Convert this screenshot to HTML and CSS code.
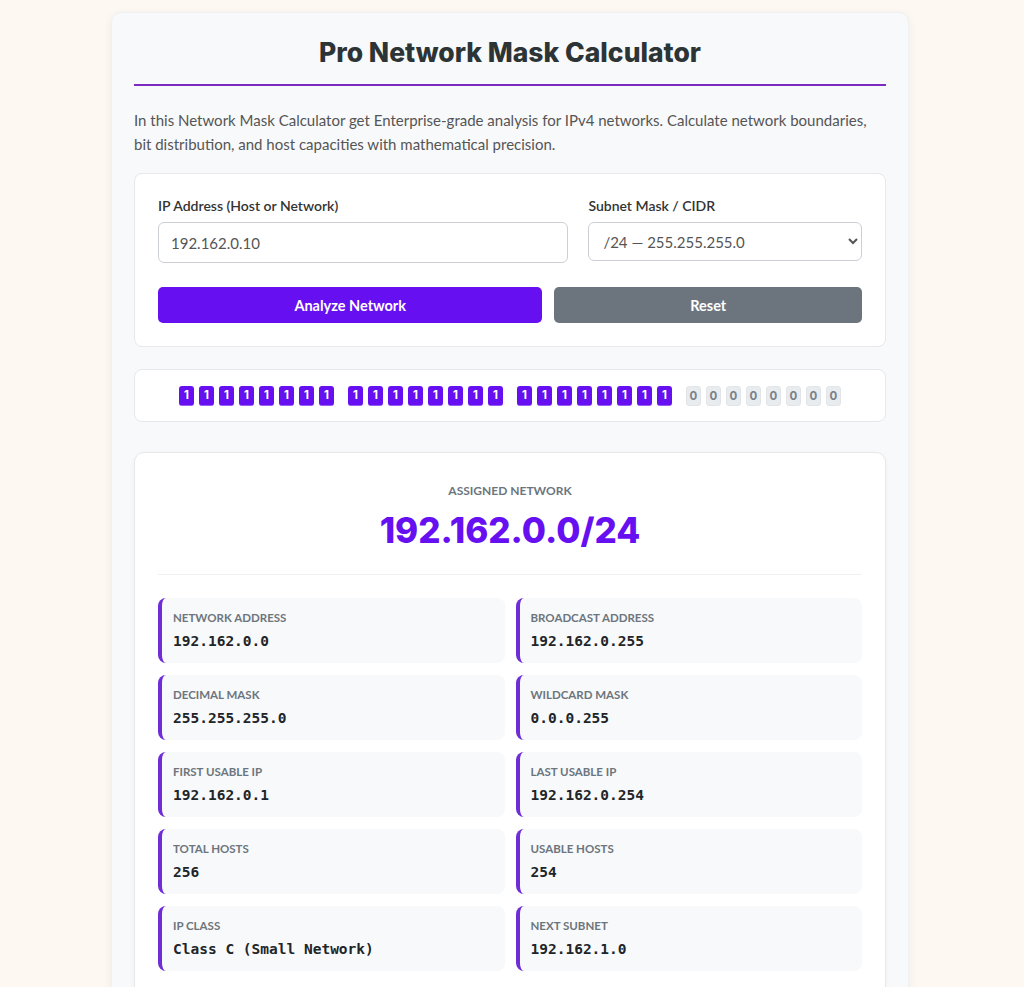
FILE: index.html
```html
<!DOCTYPE html>
<html>
<head>
    <title>Pro Network Mask Calculator</title>
    <meta name="viewport" content="width=device-width, initial-scale=1.0">
    <link rel="stylesheet" href="styles.css">
</head>
<body>
    <div class="container">
        <h1>Pro Network Mask Calculator</h1>
        <p class="intro">In this Network Mask Calculator get Enterprise-grade analysis for IPv4 networks. Calculate network boundaries, bit distribution, and host capacities with mathematical precision.</p>

        <div class="panel form-panel">
            <div class="form-row">
                <div class="input-group">
                    <label for="ipAddr">IP Address (Host or Network)</label>
                    <input type="text" id="ipAddr" value="192.162.0.10">
                </div>
                <div class="input-group">
                    <label for="cidr">Subnet Mask / CIDR</label>
                    <select id="cidr"></select>
                </div>
            </div>
            <div class="button-row">
                <button class="btn btn-primary" onclick="analyze()">Analyze Network</button>
                <button class="btn btn-secondary" onclick="resetForm()">Reset</button>
            </div>
        </div>

        <div class="panel bits-panel" id="bits"></div>

        <div class="panel result-panel">
            <div class="result-head">
                <div class="result-caption">Assigned Network</div>
                <div class="result-network" id="netCidr">192.162.0.0/24</div>
            </div>
            <div class="result-grid">
                <div class="stat"><div class="stat-label">Network Address</div><div class="stat-value" id="rNet"></div></div>
                <div class="stat"><div class="stat-label">Broadcast Address</div><div class="stat-value" id="rBcast"></div></div>
                <div class="stat"><div class="stat-label">Decimal Mask</div><div class="stat-value" id="rMask"></div></div>
                <div class="stat"><div class="stat-label">Wildcard Mask</div><div class="stat-value" id="rWild"></div></div>
                <div class="stat"><div class="stat-label">First Usable IP</div><div class="stat-value" id="rFirst"></div></div>
                <div class="stat"><div class="stat-label">Last Usable IP</div><div class="stat-value" id="rLast"></div></div>
                <div class="stat"><div class="stat-label">Total Hosts</div><div class="stat-value" id="rTotal"></div></div>
                <div class="stat"><div class="stat-label">Usable Hosts</div><div class="stat-value" id="rUsable"></div></div>
                <div class="stat"><div class="stat-label">IP Class</div><div class="stat-value" id="rClass"></div></div>
                <div class="stat"><div class="stat-label">Next Subnet</div><div class="stat-value" id="rNext"></div></div>
            </div>
        </div>
    </div>

    <script>
        function toIp(n) {
            return [n >>> 24, (n >>> 16) & 255, (n >>> 8) & 255, n & 255].join('.');
        }

        function maskOf(bits) {
            return bits === 0 ? 0 : (0xFFFFFFFF << (32 - bits)) >>> 0;
        }

        // fill the CIDR dropdown, /24 selected by default
        const select = document.getElementById('cidr');
        for (let b = 8; b <= 32; b++) {
            const opt = document.createElement('option');
            opt.value = b;
            opt.textContent = '/' + b + ' \u2014 ' + toIp(maskOf(b));
            if (b === 24) opt.selected = true;
            select.appendChild(opt);
        }

        function ipClass(first) {
            if (first < 128) return 'Class A (Large Network)';
            if (first < 192) return 'Class B (Medium Network)';
            if (first < 224) return 'Class C (Small Network)';
            if (first < 240) return 'Class D (Multicast)';
            return 'Class E (Reserved)';
        }

        function drawBits(bits) {
            const box = document.getElementById('bits');
            box.innerHTML = '';
            for (let o = 0; o < 4; o++) {
                const group = document.createElement('div');
                group.className = 'bit-group';
                for (let i = 0; i < 8; i++) {
                    const on = o * 8 + i < bits;
                    const cell = document.createElement('span');
                    cell.className = on ? 'bit bit-on' : 'bit bit-off';
                    cell.textContent = on ? '1' : '0';
                    group.appendChild(cell);
                }
                box.appendChild(group);
            }
        }

        function analyze() {
            const parts = document.getElementById('ipAddr').value.trim().split('.').map(Number);
            if (parts.length !== 4 || parts.some(p => isNaN(p) || p < 0 || p > 255)) {
                alert('Please enter a valid IPv4 address');
                return;
            }
            const bits = Number(select.value);
            const ip = ((parts[0] << 24) | (parts[1] << 16) | (parts[2] << 8) | parts[3]) >>> 0;
            const mask = maskOf(bits);
            const net = (ip & mask) >>> 0;
            const bcast = (net | (~mask >>> 0)) >>> 0;
            const total = Math.pow(2, 32 - bits);
            const usable = bits >= 31 ? (bits === 31 ? 2 : 1) : total - 2;

            document.getElementById('netCidr').innerText = toIp(net) + '/' + bits;
            document.getElementById('rNet').innerText = toIp(net);
            document.getElementById('rBcast').innerText = toIp(bcast);
            document.getElementById('rMask').innerText = toIp(mask);
            document.getElementById('rWild').innerText = toIp(~mask >>> 0);
            document.getElementById('rFirst').innerText = toIp(bits >= 31 ? net : net + 1);
            document.getElementById('rLast').innerText = toIp(bits >= 31 ? bcast : bcast - 1);
            document.getElementById('rTotal').innerText = total.toLocaleString('en-US');
            document.getElementById('rUsable').innerText = usable.toLocaleString('en-US');
            document.getElementById('rClass').innerText = ipClass(parts[0]);
            document.getElementById('rNext').innerText = toIp((bcast + 1) >>> 0);
            drawBits(bits);
        }

        function resetForm() {
            document.getElementById('ipAddr').value = '192.162.0.10';
            select.value = 24;
            analyze();
        }

        analyze();
    </script>
</body>
</html>
```

FILE: styles.css
```css
body {
    margin: 0;
    padding: 12px 4px 40px 0;
    background-color: #fdf8f2;
    font-family: "Lato", "Liberation Sans", sans-serif;
    color: #333;
}

.container {
    width: 752px;
    margin: 0 auto;
    padding: 20px 22px 24px;
    background-color: #f8f9fa;
    border: 1px solid #eef0f2;
    border-radius: 10px;
    box-shadow: 0 2px 10px rgba(0,0,0,0.06);
}

h1 {
    margin: 0;
    padding: 3px 0 16px;
    text-align: center;
    font-family: "Inter", "Liberation Sans", sans-serif;
    font-size: 26.5px;
    font-weight: 800;
    color: #2d3436;
    border-bottom: 2px solid #7b2cbf;
}

.intro {
    margin: 22px 0 17px;
    font-size: 15px;
    line-height: 24px;
    color: #555;
}

.panel {
    background-color: #fff;
    border: 1px solid #e6e8eb;
    border-radius: 8px;
}

.form-panel {
    padding: 23px;
}

.form-row {
    display: grid;
    grid-template-columns: 3fr 2fr;
    gap: 20px;
    align-items: start;
}

label {
    display: block;
    margin-bottom: 8px;
    font-size: 14px;
    font-weight: 600;
    color: #333;
}

input, select {
    width: 100%;
    box-sizing: border-box;
    border: 1px solid #ccd0d4;
    border-radius: 6px;
    font-family: "Lato", "Liberation Sans", sans-serif;
    font-size: 15px;
    color: #555;
    background-color: #fff;
}

input {
    height: 41px;
    padding: 0 12px;
}

select {
    height: 39px;
    padding: 0 10px;
}

.button-row {
    display: grid;
    grid-template-columns: 5fr 4fr;
    gap: 12px;
    margin-top: 24px;
}

.btn {
    height: 36px;
    border: none;
    border-radius: 5px;
    font-family: "Lato", "Liberation Sans", sans-serif;
    font-size: 14.5px;
    font-weight: 700;
    color: #fff;
    cursor: pointer;
}

.btn-primary {
    background-color: #6610f2;
}

.btn-primary:hover {
    background-color: #560bd0;
}

.btn-secondary {
    background-color: #6c757d;
}

.btn-secondary:hover {
    background-color: #5a6268;
}

.bits-panel {
    margin-top: 22px;
    height: 51px;
    display: flex;
    justify-content: center;
    align-items: center;
    gap: 14px;
}

.bit-group {
    display: flex;
    gap: 5px;
}

.bit {
    width: 15px;
    height: 20px;
    border-radius: 3px;
    display: flex;
    align-items: center;
    justify-content: center;
    font-family: "Inter", "Liberation Sans", sans-serif;
    font-size: 11.5px;
    font-weight: 700;
    box-sizing: border-box;
}

.bit-on {
    background-color: #6610f2;
    color: #fff;
    border-bottom: 1px solid #9a5cf5;
}

.bit-off {
    background-color: #e9ecef;
    color: #7a8289;
    border: 1px solid #e2e5e8;
}

.result-panel {
    margin-top: 30px;
    padding: 30px 23px 24px;
    border-radius: 10px;
    box-shadow: 0 2px 6px rgba(0,0,0,0.04);
}

.result-head {
    text-align: center;
    padding-bottom: 22px;
    border-bottom: 1px solid #f0f1f3;
}

.result-caption {
    font-size: 12px;
    font-weight: 700;
    text-transform: uppercase;
    color: #6c757d;
}

.result-network {
    margin-top: 10px;
    font-family: "Inter", "Liberation Sans", sans-serif;
    font-size: 35px;
    font-weight: 800;
    line-height: 44px;
    color: #6610f2;
}

.result-grid {
    display: grid;
    grid-template-columns: 1fr 1fr;
    gap: 12px 11px;
    margin-top: 23px;
}

.stat {
    background-color: #f8f9fa;
    border-left: 4px solid #6f2dd6;
    border-radius: 8px;
    padding: 11px 12px 12px 11px;
}

.stat-label {
    font-size: 11.5px;
    font-weight: 700;
    text-transform: uppercase;
    color: #6c757d;
    line-height: 18px;
}

.stat-value {
    margin-top: 4px;
    font-family: "DejaVu Sans Mono", "Liberation Mono", monospace;
    font-size: 14.5px;
    font-weight: 700;
    color: #212529;
    line-height: 20px;
}
```
